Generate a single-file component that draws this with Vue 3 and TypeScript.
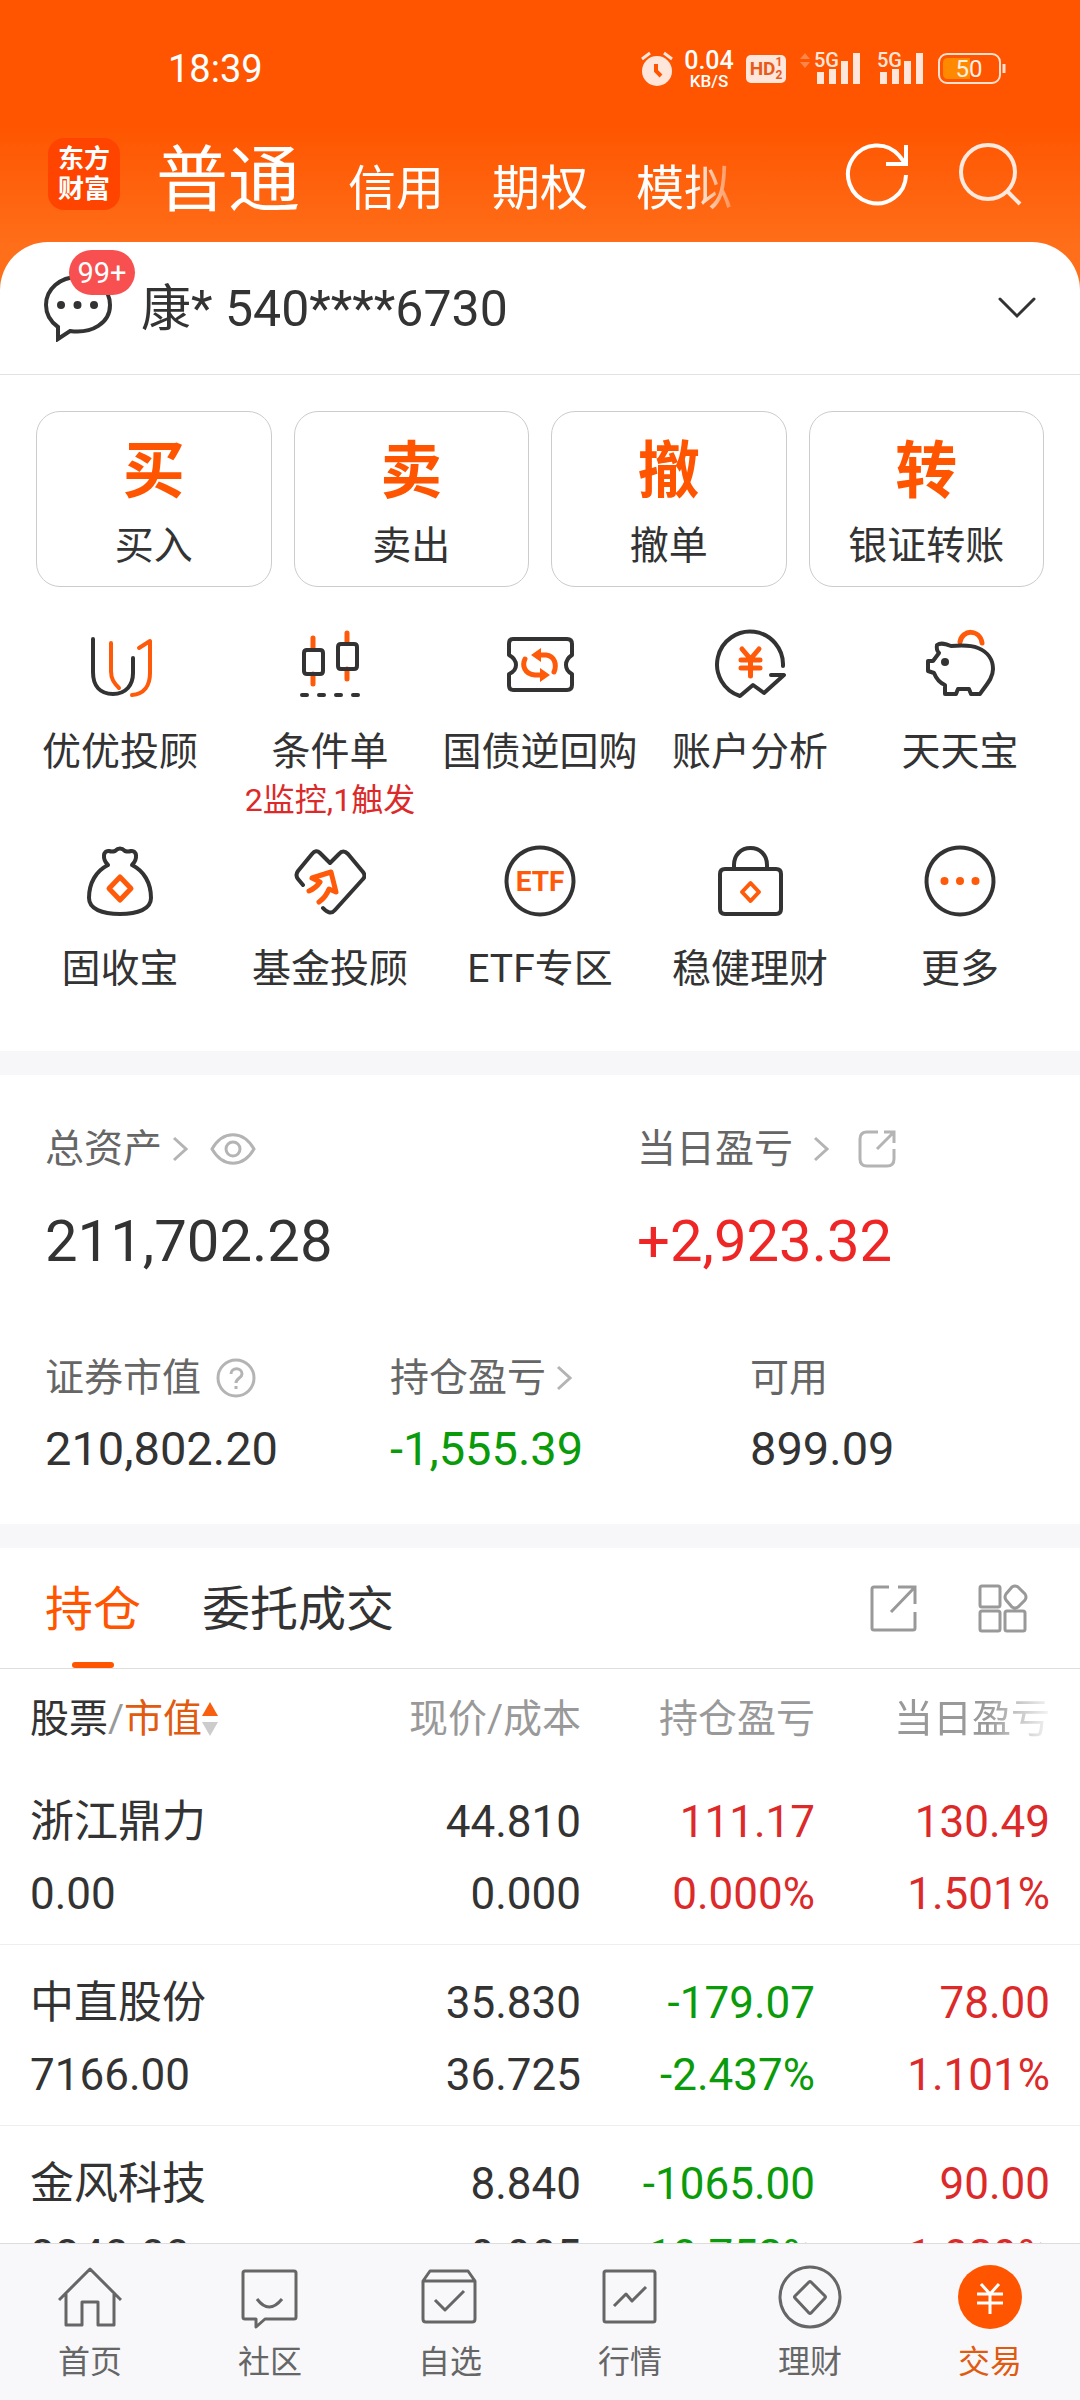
<script setup lang="ts">
import { ref } from 'vue'

interface Stroke {
  d: string
  hot?: boolean
  fill?: boolean
  w?: number
}
interface Shortcut {
  label: string
  note?: string
  text?: string
  strokes: Stroke[]
}
interface Cell {
  top: string
  bottom: string
  tone: 'plain' | 'up' | 'down'
}
interface Holding {
  name: string
  value: string
  cells: Cell[]
}

const markets = ['普通', '信用', '期权', '模拟']
const market = ref('普通')

const actions = [
  { mark: '买', label: '买入' },
  { mark: '卖', label: '卖出' },
  { mark: '撤', label: '撤单' },
  { mark: '转', label: '银证转账' },
]

const ring = 'M36 2.5a33.5 33.5 0 1 0 .01 0z'

const shortcuts: Shortcut[] = [
  {
    label: '优优投顾',
    strokes: [
      { d: 'M27 15V43C27 51 30 55 35 60', hot: true },
      { d: 'M55 20L66 13V45C66 58 60 66 48 67', hot: true },
      { d: 'M9 11V44C9 58 16 66 29 66S49 57 49 45V30' },
    ],
  },
  {
    label: '条件单',
    note: '2监控,1触发',
    strokes: [
      { d: 'M19 10V20M19 46V56M53 5V15M53 41V51', hot: true, w: 5 },
      { d: 'M12 22H26Q29 22 29 25V43Q29 46 26 46H13Q10 46 10 43V25Q10 22 13 22zM47 16H60Q63 16 63 19V38Q63 41 60 41H47Q44 41 44 38V19Q44 16 47 16z' },
      { d: 'M8 67H13M25 67H30M42 67H47M59 67H64' },
    ],
  },
  {
    label: '国债逆回购',
    strokes: [
      { d: 'M9 11H63Q68 11 68 16V27Q62 31 62 37T68 46V57Q68 62 63 62H9Q5 62 5 57V46Q12 43 12 37T5 27V16Q5 11 9 11z' },
      { d: 'M36 27H42C51 28 53 37 50 44M37 47H31C20 46 18 37 21 31', hot: true, w: 5 },
      { d: 'M27 27L37 20V34zM46 47L36 40V54z', hot: true, fill: true },
    ],
  },
  {
    label: '账户分析',
    strokes: [
      { d: 'M69 38A33 33 0 1 0 26 68L39 57L50 65L70 47H57' },
      { d: 'M28 21L36.5 31L45 21M36.5 31V48M27 32H46M27 40H46', hot: true, w: 5 },
    ],
  },
  {
    label: '天天宝',
    strokes: [
      { d: 'M36 14C38 1 56 1 58 15', hot: true, w: 5 },
      { d: 'M13 17C17 14 22 16 27 18C38 17 47 17 54 20C64 24 69 32 69 41C69 51 61 58 56 66H47L45 61H34L32 66H21V57C16 55 12 50 10 45L4 43V33H9L15 25Q12 22 13 17z' },
      { d: 'M21 34h.01', w: 8 },
    ],
  },
  {
    label: '固收宝',
    strokes: [
      { d: 'M24 20C18 14 19 5 25 6Q28 7 31 6Q36 1 41 6Q44 7 47 6C53 5 54 14 48 20C60 26 67 38 67 53C67 64 54 69 36 69S5 64 5 53C5 38 12 26 24 20' },
      { d: 'M36 32L47 43.5L36 55L25 43.5z', hot: true, w: 5 },
    ],
  },
  {
    label: '基金投顾',
    strokes: [
      { d: 'M9 40L4 34Q1 30 4 26L18 9Q22 4 26 8L36 18L45 9Q49 4 54 9L69 27Q72 31 69 34L41 65Q36 71 29 63' },
      { d: 'M15 46Q22 43 26 37L18 33L37 27L42 47L35 44Q32 52 25 57', hot: true, w: 5 },
    ],
  },
  { label: 'ETF专区', text: 'ETF', strokes: [{ d: ring }] },
  {
    label: '稳健理财',
    strokes: [
      { d: 'M11 24H62Q67 24 67 29V64Q67 69 62 69H11Q6 69 6 64V29Q6 24 11 24zM20 23V20C20 10 27 3 36.5 3S53 10 53 20V23' },
      { d: 'M36.5 38L45 47L36.5 56L28 47z', hot: true },
    ],
  },
  {
    label: '更多',
    strokes: [{ d: ring }, { d: 'M20.500 36h.01M36 36h.01M51.500 36h.01', hot: true, w: 8 }],
  },
]

const holdings: Holding[] = [
  {
    name: '浙江鼎力',
    value: '0.00',
    cells: [
      { top: '44.810', bottom: '0.000', tone: 'plain' },
      { top: '111.17', bottom: '0.000%', tone: 'up' },
      { top: '130.49', bottom: '1.501%', tone: 'up' },
    ],
  },
  {
    name: '中直股份',
    value: '7166.00',
    cells: [
      { top: '35.830', bottom: '36.725', tone: 'plain' },
      { top: '-179.07', bottom: '-2.437%', tone: 'down' },
      { top: '78.00', bottom: '1.101%', tone: 'up' },
    ],
  },
  {
    name: '金风科技',
    value: '8840.00',
    cells: [
      { top: '8.840', bottom: '9.905', tone: 'plain' },
      { top: '-1065.00', bottom: '-10.752%', tone: 'down' },
      { top: '90.00', bottom: '1.029%', tone: 'up' },
    ],
  },
]

const tabs = [
  { label: '首页', d: 'M1 35L32 4L63 35M8 29V60H24V37H40V60H56V29' },
  { label: '社区', d: 'M7 6H56Q58 6 58 8V52Q58 54 56 54H27L18 62V54H7Q5 54 5 52V8Q5 6 7 6zM19 34Q31 50 44 34' },
  { label: '自选', d: 'M5 16L12 6H50L57 16V54Q57 57 54 57H8Q5 57 5 54zM5 16H57M17 35L27 45L46 26' },
  { label: '行情', d: 'M8 6H55Q57 6 57 8V55Q57 57 55 57H8Q6 57 6 55V8Q6 6 8 6zM16 41L28 29L34 36L48 22' },
  { label: '理财', d: 'M32 2a30 30 0 1 0 .01 0zM33 17L47 31Q48 32 47 33L33 48Q32 49 31 48L17 33Q16 32 17 31L31 17Q32 16 33 17z' },
  { label: '交易', d: 'M23 19L32 29L41 19M32 29V49M19 29H45M19 38H45' },
]
const tab = ref('交易')
</script>

<template>
  <div class="page">
    <div class="status">
      <span class="clock">18:39</span>
      <div class="signals">
        <svg width="32" height="36" viewBox="0 0 32 36">
          <circle cx="16" cy="20" r="15" fill="#ffe6da" />
          <path d="M1 8L9 2M31 8L23 2" stroke="#ffe6da" stroke-width="3" fill="none" />
          <path d="M15 13V20L20 25" stroke="#ff5500" stroke-width="4" fill="none" />
        </svg>
        <div class="speed"><b>0.04</b><small>KB/S</small></div>
        <div class="hd"><b>HD</b><span><i>1</i><i>2</i></span></div>
        <svg class="updown" width="10" height="32" viewBox="0 0 10 32">
          <path d="M0 6L5 0L10 6zM0 9L5 15L10 9z" fill="#ff8548" />
        </svg>
        <svg v-for="n in 2" :key="n" class="bars" width="48" height="46" viewBox="0 0 48 46">
          <text x="0" y="21" font-size="20" font-weight="500" fill="#ffe6da">5G</text>
          <path d="M3 26H10V38H3zM15 23H22V38H15zM27 15H34V38H27zM39 7H46V38H39z" fill="#ffe6da" />
        </svg>
        <svg class="battery" width="68" height="32" viewBox="0 0 68 32">
          <rect x="1" y="1" width="61" height="29" rx="8" fill="none" stroke="#ffe0d0" stroke-width="2" />
          <path d="M10 5H32V26H10Q5 26 5 21V10Q5 5 10 5z" fill="#ff8a00" />
          <path d="M66 11V20" stroke="#ffe0d0" stroke-width="3" />
          <text x="31" y="24" text-anchor="middle" font-size="24" fill="#fff0e6">50</text>
        </svg>
      </div>
    </div>

    <header class="head">
      <div class="logo">东方<br />财富</div>
      <nav class="markets">
        <button v-for="m in markets" :key="m" :class="{ on: m === market }" @click="market = m">{{ m }}</button>
      </nav>
      <button class="tool" aria-label="刷新">
        <svg width="64" height="64" viewBox="0 0 64 64" fill="none" stroke="#fff" stroke-width="4">
          <path d="M61 33A29 29 0 1 1 54 13.500L60 21M61 3V22H41" />
        </svg>
      </button>
      <button class="tool" aria-label="搜索">
        <svg width="64" height="64" viewBox="0 0 64 64" fill="none" stroke="#ffe9de" stroke-width="4">
          <circle cx="30" cy="30" r="27" />
          <path d="M49 49L62 62" />
        </svg>
      </button>
    </header>

    <main class="sheet">
      <section class="account">
        <button class="chat" aria-label="消息">
          <svg width="68" height="68" viewBox="0 0 68 68" fill="none" stroke="#333" stroke-width="4">
            <path d="M34 3C16 3 2 15 2 31C2 40 7 48 14 53V65L26 57C48 60 66 49 66 31C66 15 52 3 34 3z" />
            <path d="M17 31h.01M33.500 31h.01M50 31h.01" stroke-width="8" stroke-linecap="round" />
          </svg>
          <span class="badge">99+</span>
        </button>
        <span class="who">康* 540****6730</span>
        <button class="fold" aria-label="切换账户">
          <svg width="38" height="22" viewBox="0 0 38 22" fill="none" stroke="#333" stroke-width="3" stroke-linecap="round">
            <path d="M2 2L19 19L36 2" />
          </svg>
        </button>
      </section>

      <section class="actions">
        <button v-for="a in actions" :key="a.label"><b>{{ a.mark }}</b><span>{{ a.label }}</span></button>
      </section>

      <section class="shortcuts">
        <button v-for="s in shortcuts" :key="s.label">
          <svg width="72" height="72" viewBox="0 0 72 72" stroke-linecap="round" stroke-linejoin="round">
            <path
              v-for="(p, i) in s.strokes"
              :key="i"
              :d="p.d"
              :stroke="p.fill ? 'none' : p.hot ? '#ff5a0a' : '#333'"
              :fill="p.fill ? '#ff5a0a' : 'none'"
              :stroke-width="p.w ?? 4"
            />
            <text v-if="s.text" class="etf" x="36" y="46" text-anchor="middle">{{ s.text }}</text>
          </svg>
          <span class="cap">{{ s.label }}</span>
          <span v-if="s.note" class="note">{{ s.note }}</span>
        </button>
      </section>

      <section class="assets">
        <div class="totals">
          <div>
            <div class="key">
              总资产
              <svg class="near" width="16" height="26" viewBox="0 0 16 26"><path d="M2 2L14 13L2 24" /></svg>
              <svg class="eye" width="46" height="32" viewBox="0 0 46 32">
                <path d="M2 16C13-3 33-3 44 16C33 35 13 35 2 16z" /><circle cx="23" cy="16" r="7" />
              </svg>
            </div>
            <div class="big">211,702.28</div>
          </div>
          <div>
            <div class="key">
              当日盈亏
              <svg class="far" width="16" height="26" viewBox="0 0 16 26"><path d="M2 2L14 13L2 24" /></svg>
              <svg class="out" width="38" height="40" viewBox="0 0 38 40">
                <path d="M20 3H9Q2 3 2 10V30Q2 37 9 37H29Q36 37 36 30V20M26 3H36V14M36 3L19 20" />
              </svg>
            </div>
            <div class="big rise">+2,923.32</div>
          </div>
        </div>
        <div class="parts">
          <div>
            <div class="key">
              证券市值
              <svg class="ask" width="40" height="40" viewBox="0 0 40 40">
                <circle cx="20" cy="20" r="18" />
                <path d="M15 16C15 9 26 9 26 16C26 20 20 20 20 25M20 28V31" />
              </svg>
            </div>
            <div class="mid">210,802.20</div>
          </div>
          <div>
            <div class="key">
              持仓盈亏
              <svg class="near" width="16" height="26" viewBox="0 0 16 26"><path d="M2 2L14 13L2 24" /></svg>
            </div>
            <div class="mid down">-1,555.39</div>
          </div>
          <div>
            <div class="key">可用</div>
            <div class="mid">899.09</div>
          </div>
        </div>
      </section>

      <section class="book">
        <div class="switch">
          <button class="on">持仓</button>
          <button>委托成交</button>
          <button class="side" aria-label="分享">
            <svg width="48" height="48" viewBox="0 0 48 48">
              <path d="M19 3H4Q2 3 2 5V44Q2 46 4 46H43Q45 46 45 44V28M28 3H45V20M45 3L21 28" />
            </svg>
          </button>
          <button class="side" aria-label="布局">
            <svg width="50" height="50" viewBox="0 0 50 50">
              <path d="M4 3H20Q22 3 22 5V22Q22 24 20 24H4Q2 24 2 22V5Q2 3 4 3zM4 28H20Q22 28 22 30V46Q22 48 20 48H4Q2 48 2 46V30Q2 28 4 28zM29 28H45Q47 28 47 30V46Q47 48 45 48H29Q27 48 27 46V30Q27 28 29 28zM40 4L47 11Q49 14 47 17L40 24Q37 26 34 24L28 17Q26 14 28 11L34 4Q37 2 40 4z" />
            </svg>
          </button>
        </div>
        <table>
          <colgroup><col /><col class="c" /><col class="c" /><col class="last" /></colgroup>
          <thead>
            <tr>
              <th scope="col">
                <div class="sort">
                  <span class="ink">股票</span>/<span class="hot">市值</span>
                  <svg width="16" height="36" viewBox="0 0 16 36">
                    <path d="M0 15L8 1L16 15z" fill="#f86010" /><path d="M0 21L8 35L16 21z" fill="#ccc" />
                  </svg>
                </div>
              </th>
              <th scope="col">现价/成本</th>
              <th scope="col">持仓盈亏</th>
              <th scope="col"><span class="fade">当日盈亏</span></th>
            </tr>
          </thead>
          <tbody>
            <tr v-for="h in holdings" :key="h.name">
              <td><div>{{ h.name }}</div><div>{{ h.value }}</div></td>
              <td v-for="(c, i) in h.cells" :key="i" :class="c.tone"><div>{{ c.top }}</div><div>{{ c.bottom }}</div></td>
            </tr>
          </tbody>
        </table>
      </section>
    </main>

    <nav class="dock">
      <button v-for="t in tabs" :key="t.label" :class="{ on: t.label === tab }" @click="tab = t.label">
        <svg width="64" height="64" viewBox="0 0 64 64" fill="none" stroke-width="3" stroke-linejoin="round">
          <circle v-if="t.label === tab" cx="32" cy="32" r="32" fill="#ff5500" />
          <path :d="t.d" :stroke="t.label === tab ? '#fff' : '#666'" />
        </svg>
        <span>{{ t.label }}</span>
      </button>
    </nav>
  </div>
</template>

<style>
body {
  margin: 0;
}
</style>

<style scoped>
* {
  box-sizing: border-box;
}
.page {
  display: flex;
  flex-direction: column;
  height: 100vh;
  overflow: hidden;
  color: #333;
  background: linear-gradient(#ff5500 125px, #ff6f1a 250px, #ff6f1a);
  font-family: Roboto, 'Noto Sans CJK SC', sans-serif;
  font-weight: 400;
}
button {
  margin: 0;
  padding: 0;
  border: 0;
  background: none;
  color: inherit;
  font: inherit;
}
svg {
  display: block;
  flex: none;
}

.status {
  display: flex;
  flex: none;
  align-items: center;
  justify-content: space-between;
  height: 138px;
  padding: 0 74px 0 168px;
  color: #fff;
}
.clock {
  font-size: 38px;
  font-weight: 450;
}
.signals {
  display: flex;
  align-items: center;
}
.speed {
  display: flex;
  flex-direction: column;
  align-items: center;
  width: 52px;
  margin: 0 11px 0 10px;
}
.speed b {
  font-size: 25px;
  font-weight: 500;
  line-height: 24px;
}
.speed small {
  font-size: 17px;
  font-weight: 500;
  line-height: 17px;
}
.hd {
  display: flex;
  align-items: center;
  justify-content: center;
  width: 40px;
  height: 28px;
  border-radius: 5px;
  background: #ffe6da;
  color: #e85a1a;
  font-size: 19px;
  line-height: 28px;
}
.hd span {
  display: flex;
  flex-direction: column;
}
.hd i {
  font-size: 12px;
  font-style: normal;
  font-weight: 700;
  line-height: 13px;
}
.updown {
  margin-left: 14px;
}
.bars {
  margin-left: 4px;
}
.bars + .bars {
  margin-left: 15px;
}
.battery {
  margin-left: 13px;
}

.head {
  display: flex;
  flex: none;
  align-items: center;
  height: 72px;
  margin-bottom: 32px;
  padding: 0 58px 0 48px;
  color: #fff;
}
.logo {
  flex: none;
  width: 72px;
  height: 72px;
  padding: 6px 0;
  border-radius: 16px;
  background: #ff4400;
  font-size: 26px;
  font-weight: 700;
  line-height: 30px;
  text-align: center;
}
.markets {
  display: flex;
  flex: 1;
  align-items: baseline;
  align-self: flex-start;
  gap: 48px;
  margin: 0 114px 0 36px;
  overflow: hidden;
  white-space: nowrap;
  mask-image: linear-gradient(90deg, #000 calc(100% - 40px), rgba(0, 0, 0, 0.3));
}
.markets button {
  font-size: 48px;
  line-height: 86px;
}
.markets .on {
  font-size: 72px;
}
.tool + .tool {
  margin-left: 49px;
}

.sheet {
  flex: 1;
  min-height: 0;
  overflow: hidden;
  border-radius: 48px 48px 0 0;
  background: #fff;
}
.account {
  display: flex;
  align-items: center;
  height: 133px;
  padding: 0 44px;
  border-bottom: 1px solid #e2e2e2;
}
.chat {
  position: relative;
}
.badge {
  position: absolute;
  top: -24px;
  left: 25px;
  width: 66px;
  height: 45px;
  border-radius: 23px;
  background: #f85050;
  color: #fff;
  font-size: 29px;
  line-height: 46px;
}
.who {
  flex: 1;
  padding-top: 2px;
  margin-left: 29px;
  font-size: 50px;
  line-height: 64px;
}

.actions {
  display: grid;
  grid-template-columns: repeat(4, 1fr);
  gap: 22px;
  padding: 36px 36px 0;
}
.actions button {
  display: flex;
  flex-direction: column;
  align-items: center;
  height: 176px;
  padding-top: 20px;
  border: 1px solid #ccc;
  border-radius: 24px;
}
.actions b {
  color: #ff5500;
  font-size: 62px;
  line-height: 80px;
}
.actions span {
  margin-top: 10px;
  font-size: 39px;
  line-height: 48px;
}

.shortcuts {
  display: grid;
  grid-template-columns: repeat(5, 1fr);
  row-gap: 21px;
  padding: 41px 15px 58px;
}
.shortcuts button {
  display: flex;
  flex-direction: column;
  align-items: center;
  white-space: nowrap;
}
.etf {
  fill: #ff5a0a;
  font-size: 28px;
  font-weight: 700;
}
.cap {
  margin-top: 28px;
  font-size: 39px;
  line-height: 48px;
}
.note {
  color: #dc2a2a;
  font-size: 32px;
  line-height: 48px;
}

.assets {
  padding: 50px 0 47px 45px;
  border-top: 24px solid #f7f7fa;
  border-bottom: 24px solid #f7f7fa;
  box-sizing: content-box;
}
.totals {
  display: grid;
  grid-template-columns: 592fr 443fr;
}
.parts {
  display: grid;
  grid-template-columns: 345fr 360fr 330fr;
  margin-top: 77px;
}
.key {
  display: flex;
  align-items: center;
  color: #666;
  font-size: 39px;
  line-height: 48px;
}
.key svg {
  fill: none;
  stroke: #b4b4b4;
  stroke-width: 3;
}
.near {
  margin-left: 10px;
}
.far {
  margin-left: 20px;
}
.eye {
  margin-left: 22px;
}
.out {
  margin-left: 29px;
}
.ask {
  margin-left: 15px;
}
.big {
  margin-top: 32px;
  font-size: 58px;
  font-weight: 450;
  line-height: 72px;
}
.mid {
  margin-top: 19px;
  font-size: 47px;
  line-height: 56px;
}
.rise {
  color: #ee2626;
}
.up {
  color: #dc2a2a;
}
.down {
  color: #0a9b0a;
}

.switch {
  display: flex;
  height: 121px;
  padding: 0 52px 0 45px;
  border-bottom: 1px solid #ddd;
  font-size: 48px;
  line-height: 124px;
}
.switch button + button {
  margin-left: 61px;
}
.switch .on {
  position: relative;
  color: #ff5500;
}
.switch .on::after {
  content: '';
  position: absolute;
  bottom: 0;
  left: 50%;
  width: 42px;
  height: 6px;
  margin-left: -21px;
  border-radius: 3px;
  background: #ff5500;
}
.switch .side {
  display: flex;
  align-items: center;
}
.switch button + .side {
  margin-left: auto;
}
.switch .side + .side {
  margin-left: 60px;
}
.side svg {
  fill: none;
  stroke: #999;
  stroke-width: 3;
}

table {
  width: 100%;
  border-spacing: 0;
  table-layout: fixed;
}
.c {
  width: 234px;
}
.last {
  width: 265px;
}
th {
  height: 95px;
  padding: 4px 0 0;
  color: #999;
  font-size: 39px;
  font-weight: inherit;
  line-height: 48px;
  text-align: right;
  white-space: nowrap;
}
th:first-child,
td:first-child {
  padding-left: 30px;
  text-align: left;
}
th:last-child,
td:last-child {
  padding-right: 30px;
}
.sort {
  display: flex;
  align-items: center;
}
.ink {
  color: #333;
}
.hot {
  color: #e05a10;
}
.fade {
  mask-image: linear-gradient(90deg, #000 60%, rgba(0, 0, 0, 0.1));
}
td {
  padding: 22px 0 14px;
  border-bottom: 1px solid #eee;
  font-size: 44px;
  line-height: 72px;
  text-align: right;
  white-space: nowrap;
}

.dock {
  display: grid;
  flex: none;
  grid-template-columns: repeat(6, 1fr);
  height: 157px;
  padding-top: 21px;
  border-top: 1px solid #ddd;
  background: #f8f8fb;
  color: #666;
}
.dock button {
  display: flex;
  flex-direction: column;
  align-items: center;
}
.dock span {
  margin-top: 13px;
  font-size: 32px;
  line-height: 40px;
}
.dock .on {
  color: #e05a10;
}
</style>
